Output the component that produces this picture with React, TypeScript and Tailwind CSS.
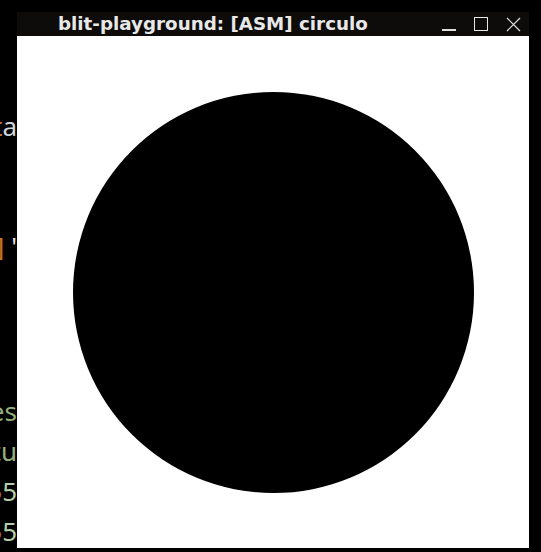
export default function App() {
  const lines: { top: number; parts: { t: string; c: string }[] }[] = [
    { top: 106, parts: [{ t: "dat", c: "#ce7a3a" }, { t: "a", c: "#cfd6dc" }] },
    { top: 226, parts: [{ t: "10]", c: "#d07020" }, { t: " '", c: "#d8dde2" }] },
    { top: 391, parts: [{ t: "tes", c: "#93b07c" }] },
    { top: 431, parts: [{ t: "t", c: "#c0a440" }, { t: "u", c: "#93b07c" }] },
    { top: 471, parts: [{ t: "5", c: "#c78a50" }, { t: "5", c: "#b5cea8" }] },
    { top: 511, parts: [{ t: "5", c: "#c78a50" }, { t: "5", c: "#b5cea8" }] },
  ];
  return (
    <div className="relative w-[541px] h-[552px] bg-black overflow-hidden">
      {lines.map((l, i) => (
        <div
          key={i}
          className="absolute left-0 w-[17px] h-[40px] flex justify-end overflow-hidden whitespace-nowrap text-[26px] leading-[40px]"
          style={{ top: l.top, fontFamily: '"Noto Sans", "DejaVu Sans", sans-serif' }}
        >
          <span>
            {l.parts.map((p, j) => (
              <span key={j} style={{ color: p.c }}>
                {p.t}
              </span>
            ))}
          </span>
        </div>
      ))}
      <div className="absolute left-[17px] top-[12px] w-[512px] flex flex-col">
        <div className="relative h-[24px] bg-[#0d0c0b] flex items-center">
          <span
            className="ml-[41px] text-[18.3px] font-bold text-[#e8e8e8] leading-none whitespace-nowrap"
            style={{ fontFamily: '"DejaVu Sans", sans-serif' }}
          >
            blit-playground: [ASM] circulo
          </span>
          <div className="absolute left-[425px] top-[17px] w-[14px] h-[1.5px] bg-[#e0e0e0]" />
          <div className="absolute left-[457px] top-[5px] w-[14px] h-[14px] border border-[#e8e8e8]" />
          <svg className="absolute left-[489px] top-[5px]" width="15" height="15" viewBox="0 0 15 15">
            <path d="M1 1 L14 14 M14 1 L1 14" stroke="#e0e0e0" strokeWidth="1.2" fill="none" />
          </svg>
        </div>
        <div className="w-[512px] h-[512px] bg-white flex items-center justify-center">
          <div className="w-[401px] h-[401px] rounded-full bg-black" />
        </div>
      </div>
    </div>
  );
}
